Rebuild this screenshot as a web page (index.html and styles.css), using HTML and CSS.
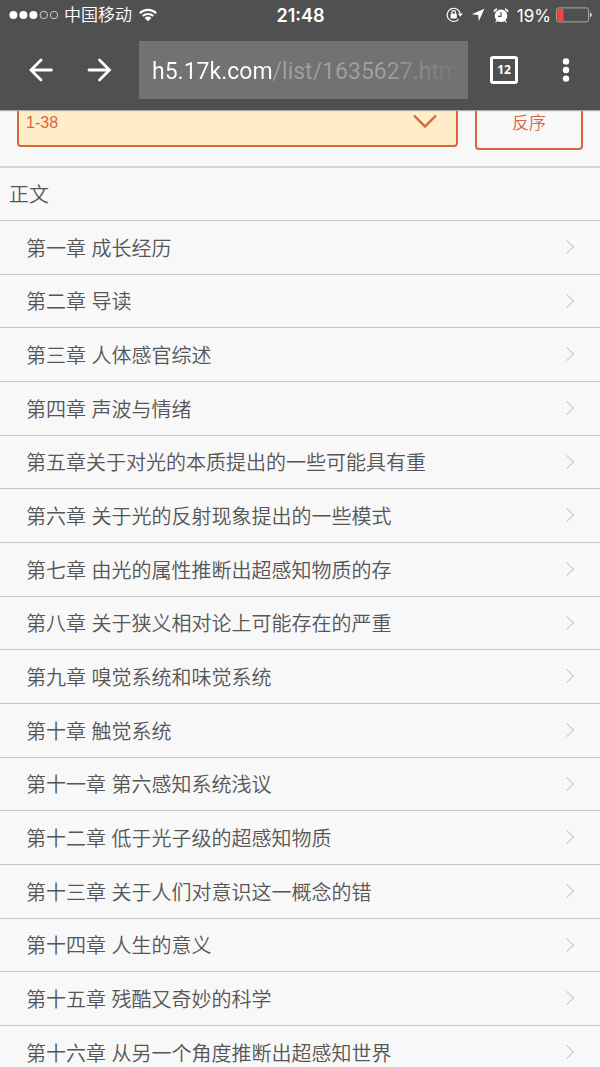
FILE: index.html
```
<!DOCTYPE html>
<html lang="zh-CN">
<head>
    <meta charset="UTF-8">
    <meta name="viewport" content="width=device-width, initial-scale=1.0">
    <title>目录</title>
    <link rel="stylesheet" href="styles.css">
</head>
<body>
    <header class="browser-bar">
        <div class="status-bar">
            <div class="status-left">
                <svg class="signal" width="50" height="10" viewBox="0 0 50 10">
                    <g fill="#fff">
                        <circle cx="4.4" cy="5" r="4"/>
                        <circle cx="14.4" cy="5" r="4"/>
                        <circle cx="24.4" cy="5" r="4"/>
                    </g>
                    <g fill="none" stroke="#ccc" stroke-width="1">
                        <circle cx="34.8" cy="5" r="3.7"/>
                        <circle cx="45" cy="5" r="3.7"/>
                    </g>
                </svg>
                <span class="carrier">中国移动</span>
                <svg class="wifi" width="18" height="14" viewBox="0 0 18 14">
                    <g fill="none" stroke="#fff" stroke-width="2.1">
                        <path d="M.8 5.2a11.7 11.7 0 0 1 16.4 0"/>
                        <path d="M3.7 8.1a7.6 7.6 0 0 1 10.6 0"/>
                    </g>
                    <path d="M9 13.2 5.6 9.9a4.8 4.8 0 0 1 6.8 0z" fill="#fff"/>
                </svg>
            </div>
            <div class="clock">21:48</div>
            <div class="status-right">
                <div class="status-icons">
                    <svg width="17" height="16" viewBox="0 0 17 16">
                        <path d="M12.6 12.4A6.6 6.6 0 1 1 14.2 6.4" fill="none" stroke="#fff" stroke-width="1.2"/>
                        <path d="M11.8 6.4h5l-2.5 3.4z" fill="#fff"/>
                        <rect x="4.6" y="6.8" width="6.2" height="4.8" rx=".6" fill="#fff"/>
                        <path d="M5.9 7V5.4a1.8 1.8 0 0 1 3.6 0V7" fill="none" stroke="#fff" stroke-width="1.2"/>
                    </svg>
                    <svg width="14" height="14" viewBox="0 0 14 14">
                        <path d="M13.4.8 7.8 13.2 7.2 7 .8 6.3z" fill="#fff"/>
                    </svg>
                    <svg width="16" height="15" viewBox="0 0 16 15">
                        <circle cx="8" cy="7.8" r="6.3" fill="#fff"/>
                        <g fill="none" stroke="#fff" stroke-linecap="round">
                            <path d="M1.2 3.2A8 8 0 0 1 3.4 1.2M14.8 3.2a8 8 0 0 0-2.2-2" stroke-width="1.6"/>
                            <path d="m4 12.6-1 1.3M12 12.6l1 1.3" stroke-width="1.2"/>
                        </g>
                        <path d="M8 4v4.3H5" fill="none" stroke="#505050" stroke-width="1.2"/>
                    </svg>
                    <span class="percent">19%</span>
                </div>
                <svg class="battery" width="36" height="16" viewBox="0 0 36 16">
                    <rect x=".6" y=".9" width="32" height="14" rx="2.2" fill="none" stroke="#aaa"/>
                    <path d="M2.8 2h4.7v11.8H2.8A1.2 1.2 0 0 1 1.6 12.6V3.2A1.2 1.2 0 0 1 2.8 2z" fill="#f7443c"/>
                    <path d="M34 5.5q1.8.7 1.8 2.4T34 10.3z" fill="#ddd"/>
                </svg>
            </div>
        </div>
        <div class="toolbar">
            <button class="icon-btn" type="button" aria-label="后退">
                <svg width="26" height="26" viewBox="0 0 26 26">
                    <path d="M23.5 13H3.2M13 3 3 13l10 10" fill="none" stroke="#fff" stroke-width="2.8" stroke-linecap="round"/>
                </svg>
            </button>
            <button class="icon-btn" type="button" aria-label="前进">
                <svg width="26" height="26" viewBox="0 0 26 26">
                    <path d="M3 13h20.3M13.5 3l10 10-10 10" fill="none" stroke="#fff" stroke-width="2.8" stroke-linecap="round"/>
                </svg>
            </button>
            <label class="address">
                <input class="address-input" type="text" aria-label="网址" value="h5.17k.com/list/1635627.html">
            </label>
            <button class="tabs-btn" type="button" aria-label="标签页">12</button>
            <button class="menu-btn" type="button" aria-label="菜单">
                <svg width="8" height="24" viewBox="0 0 8 24" fill="#fff">
                    <circle cx="4" cy="3.4" r="3.2"/>
                    <circle cx="4" cy="12" r="3.2"/>
                    <circle cx="4" cy="20.6" r="3.2"/>
                </svg>
            </button>
        </div>
    </header>

    <main>
        <div class="filter">
            <label class="range">
                <select class="range-select" aria-label="章节范围">
                    <option>1-38</option>
                </select>
                <svg class="range-arrow" width="24" height="15" viewBox="0 0 24 15">
                    <path d="m1 1.5 11 11 11-11" fill="none" stroke="#d9653b" stroke-width="2.4"/>
                </svg>
            </label>
            <button class="reverse-btn" type="button">反序</button>
        </div>

        <h2 class="volume">正文</h2>
        <ul class="chapters">
            <li><a href="#">第一章 成长经历</a></li>
            <li><a href="#">第二章 导读</a></li>
            <li><a href="#">第三章 人体感官综述</a></li>
            <li><a href="#">第四章 声波与情绪</a></li>
            <li><a href="#">第五章关于对光的本质提出的一些可能具有重</a></li>
            <li><a href="#">第六章 关于光的反射现象提出的一些模式</a></li>
            <li><a href="#">第七章 由光的属性推断出超感知物质的存</a></li>
            <li><a href="#">第八章 关于狭义相对论上可能存在的严重</a></li>
            <li><a href="#">第九章 嗅觉系统和味觉系统</a></li>
            <li><a href="#">第十章 触觉系统</a></li>
            <li><a href="#">第十一章 第六感知系统浅议</a></li>
            <li><a href="#">第十二章 低于光子级的超感知物质</a></li>
            <li><a href="#">第十三章 关于人们对意识这一概念的错</a></li>
            <li><a href="#">第十四章 人生的意义</a></li>
            <li><a href="#">第十五章 残酷又奇妙的科学</a></li>
            <li><a href="#">第十六章 从另一个角度推断出超感知世界</a></li>
        </ul>
    </main>
</body>
</html>
```

FILE: styles.css
```
* {
    box-sizing: border-box;
}
html {
    scrollbar-width: none;
}
body {
    margin: 0;
    background: #f8f8f8;
    color: #555;
    font-family: "Liberation Sans", "Noto Sans CJK SC", sans-serif;
    font-size: 20px;
}
button {
    margin: 0;
    padding: 0;
    border: none;
    background: none;
    font-family: inherit;
    cursor: pointer;
}
svg {
    display: block;
}

/* browser chrome */
.browser-bar {
    position: sticky;
    top: 0;
    z-index: 10;
    background: #505050;
    color: #fff;
    height: 110px;
    box-shadow: 0 1px 1px #aaa;
}
.status-bar {
    display: grid;
    grid-template-columns: 1fr auto 1fr;
    align-items: center;
    height: 30px;
    padding: 0 8px 0 9px;
}
.status-left,
.status-right {
    display: flex;
    align-items: center;
    gap: 5px;
}
.status-right {
    justify-content: flex-end;
}
.status-icons {
    display: flex;
    align-items: center;
    gap: 8px;
}
.carrier {
    font-size: 17px;
    font-weight: 350;
    line-height: 24px;
    padding-top: 2px;
}
.wifi {
    margin-left: 2px;
}
.clock {
    font-family: Inter, sans-serif;
    font-size: 18px;
    font-weight: 600;
    line-height: 24px;
    padding-top: 2px;
}
.percent {
    font-family: Inter, sans-serif;
    font-size: 17px;
    line-height: 24px;
    padding-top: 2px;
}
.toolbar {
    display: flex;
    align-items: center;
    height: 80px;
    padding: 0 22px 0 12px;
}
.icon-btn {
    display: flex;
    align-items: center;
    justify-content: center;
    width: 58px;
    height: 58px;
}
.address {
    flex: 1;
    min-width: 0;
    margin: 0 22px 0 11px;
    padding: 0 5px 0 13px;
    background: #727272;
}
.address-input {
    display: block;
    width: 100%;
    height: 58px;
    padding: 2px 0 0;
    border: none;
    outline: none;
    background: linear-gradient(to right, #fff 121px, #a0a0a0 121px, #a0a0a0 75%, #727272 100%);
    -webkit-background-clip: text;
    background-clip: text;
    color: transparent;
    font-family: Roboto, sans-serif;
    font-size: 23px;
}
.tabs-btn {
    width: 28px;
    height: 28px;
    border: 3px solid #fff;
    border-radius: 3px;
    color: #fff;
    font-family: "Noto Sans", sans-serif;
    font-size: 12px;
    font-weight: 700;
    line-height: 20px;
}
.menu-btn {
    display: flex;
    align-items: center;
    justify-content: center;
    width: 24px;
    height: 58px;
    margin-left: 36px;
}

/* chapter range and order */
.filter {
    display: flex;
    align-items: center;
    gap: 17px;
    margin-top: -16px;
    padding: 0 17px 16px;
    border-bottom: 2px solid #d5d5d5;
}
.range {
    position: relative;
    flex: 1;
}
.range-select {
    display: block;
    width: 100%;
    height: 50px;
    padding: 0 7px;
    border: 2px solid #d9653b;
    border-radius: 4px;
    appearance: none;
    background: #ffedca;
    color: #d9653b;
    font-family: inherit;
    font-size: 16px;
}
.range-arrow {
    position: absolute;
    top: 17px;
    right: 21px;
    pointer-events: none;
}
.reverse-btn {
    width: 108px;
    height: 56px;
    padding-bottom: 2px;
    border: 2px solid #d9653b;
    border-radius: 4px;
    color: #d9653b;
    font-size: 17px;
    font-weight: 350;
}

/* chapter list */
.volume {
    margin: 0;
    padding: 0 9px;
    height: 53px;
    border-bottom: 1px solid #c4c4c4;
    font-size: 20px;
    font-weight: 350;
    line-height: 54px;
}
.chapters {
    margin: 0;
    padding: 0;
    list-style: none;
}
.chapters a {
    display: flex;
    align-items: center;
    justify-content: space-between;
    height: 54px;
    padding: 0 28px 1px 26px;
    border-bottom: 1px solid #c4c4c4;
    color: #555;
    font-weight: 350;
    text-decoration: none;
}
.chapters li:nth-child(3n+2) a {
    height: 53px;
}
.chapters a::after {
    content: "";
    width: 9px;
    height: 9px;
    border: solid #c8c8c8;
    border-width: 1px 1px 0 0;
    transform: rotate(45deg);
}
```
